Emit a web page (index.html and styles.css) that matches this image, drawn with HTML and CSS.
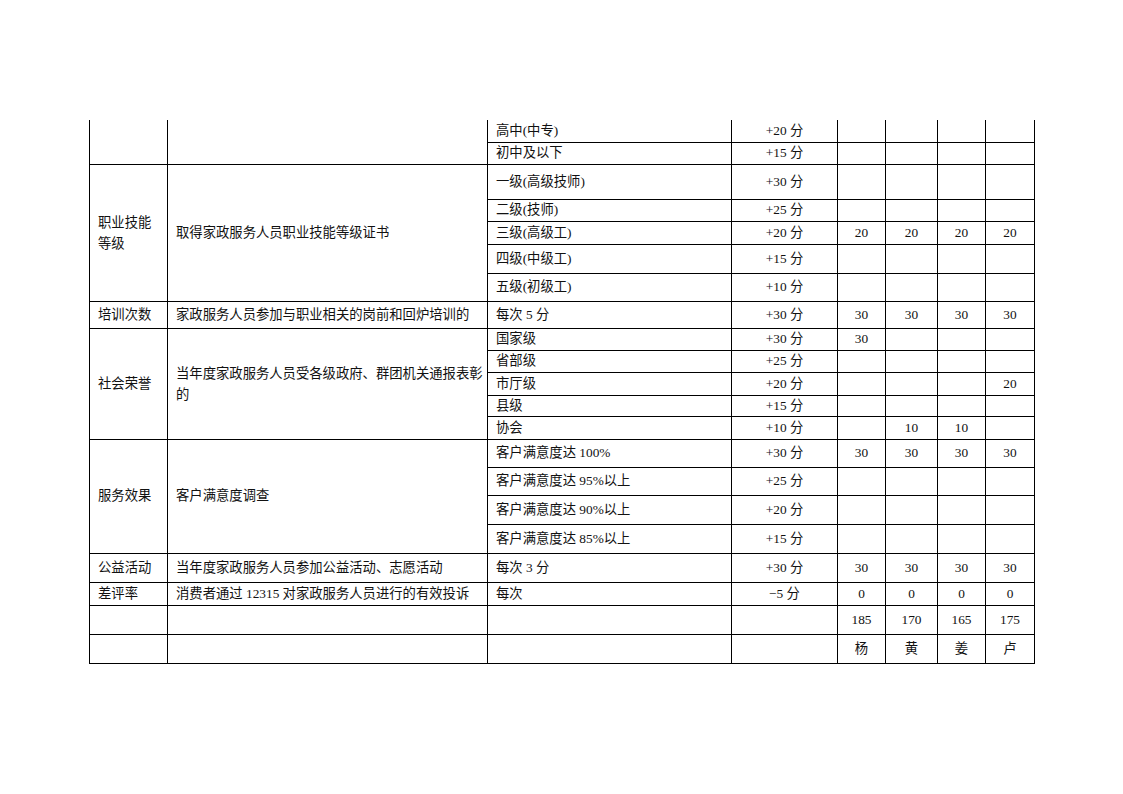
FILE: index.html
```html
<!DOCTYPE html>
<html lang="zh-CN">
<head>
<meta charset="utf-8">
<title>评分表</title>
<link rel="stylesheet" href="styles.css">
</head>
<body>
<div class="page">
<table class="score">
<colgroup>
<col class="c1"><col class="c2"><col class="c3"><col class="c4">
<col class="c5"><col class="c6"><col class="c7"><col class="c8">
</colgroup>
<tbody>
<tr class="first h22"><td rowspan="2"></td><td rowspan="2"></td><td class="t">高中(中专)</td><td class="n">+20 分</td><td></td><td></td><td></td><td></td></tr>
<tr class="h22"><td class="t">初中及以下</td><td class="n">+15 分</td><td></td><td></td><td></td><td></td></tr>

<tr class="h35"><td class="t lh" rowspan="5">职业技能<br>等级</td><td class="t" rowspan="5">取得家政服务人员职业技能等级证书</td><td class="t">一级(高级技师)</td><td class="n">+30 分</td><td></td><td></td><td></td><td></td></tr>
<tr class="h22"><td class="t">二级(技师)</td><td class="n">+25 分</td><td></td><td></td><td></td><td></td></tr>
<tr class="h23"><td class="t">三级(高级工)</td><td class="n">+20 分</td><td class="n">20</td><td class="n">20</td><td class="n">20</td><td class="n">20</td></tr>
<tr class="h29"><td class="t">四级(中级工)</td><td class="n">+15 分</td><td></td><td></td><td></td><td></td></tr>
<tr class="h28"><td class="t">五级(初级工)</td><td class="n">+10 分</td><td></td><td></td><td></td><td></td></tr>

<tr class="h27"><td class="t">培训次数</td><td class="t">家政服务人员参加与职业相关的岗前和回炉培训的</td><td class="t">每次 5 分</td><td class="n">+30 分</td><td class="n">30</td><td class="n">30</td><td class="n">30</td><td class="n">30</td></tr>

<tr class="h22"><td class="t" rowspan="5">社会荣誉</td><td class="t lh" rowspan="5">当年度家政服务人员受各级政府、群团机关通报表彰<br>的</td><td class="t">国家级</td><td class="n">+30 分</td><td class="n">30</td><td></td><td></td><td></td></tr>
<tr class="h22"><td class="t">省部级</td><td class="n">+25 分</td><td></td><td></td><td></td><td></td></tr>
<tr class="h23"><td class="t">市厅级</td><td class="n">+20 分</td><td></td><td></td><td></td><td class="n">20</td></tr>
<tr class="h21"><td class="t">县级</td><td class="n">+15 分</td><td></td><td></td><td></td><td></td></tr>
<tr class="h23"><td class="t">协会</td><td class="n">+10 分</td><td></td><td class="n">10</td><td class="n">10</td><td></td></tr>

<tr class="h28"><td class="t" rowspan="4">服务效果</td><td class="t" rowspan="4">客户满意度调查</td><td class="t">客户满意度达 100%</td><td class="n">+30 分</td><td class="n">30</td><td class="n">30</td><td class="n">30</td><td class="n">30</td></tr>
<tr class="h28"><td class="t">客户满意度达 95%以上</td><td class="n">+25 分</td><td></td><td></td><td></td><td></td></tr>
<tr class="h29"><td class="t">客户满意度达 90%以上</td><td class="n">+20 分</td><td></td><td></td><td></td><td></td></tr>
<tr class="h29"><td class="t">客户满意度达 85%以上</td><td class="n">+15 分</td><td></td><td></td><td></td><td></td></tr>

<tr class="h29"><td class="t">公益活动</td><td class="t">当年度家政服务人员参加公益活动、志愿活动</td><td class="t">每次 3 分</td><td class="n">+30 分</td><td class="n">30</td><td class="n">30</td><td class="n">30</td><td class="n">30</td></tr>
<tr class="h23"><td class="t">差评率</td><td class="t">消费者通过 12315 对家政服务人员进行的有效投诉</td><td class="t">每次</td><td class="n">−5 分</td><td class="n">0</td><td class="n">0</td><td class="n">0</td><td class="n">0</td></tr>
<tr class="h29"><td></td><td></td><td></td><td></td><td class="n">185</td><td class="n">170</td><td class="n">165</td><td class="n">175</td></tr>
<tr class="h29"><td></td><td></td><td></td><td></td><td class="n">杨</td><td class="n">黄</td><td class="n">姜</td><td class="n">卢</td></tr>
</tbody>
</table>
</div>
</body>
</html>
```

FILE: styles.css
```css
html, body {
  margin: 0;
  padding: 0;
  background: #ffffff;
}

.page {
  padding: 120px 0 0 89px;
}

.score {
  border-collapse: collapse;
  table-layout: fixed;
  width: 946px;
  font-family: "Liberation Serif", "Noto Sans CJK SC", serif;
  font-size: 13.33px;
  color: #111;
}

.c1 { width: 78px; }
.c2 { width: 320px; }
.c3 { width: 244px; }
.c4 { width: 106px; }
.c5 { width: 48px; }
.c6 { width: 52px; }
.c7 { width: 48px; }
.c8 { width: 49px; }

.score td {
  border: 1px solid #000;
  padding: 0;
  vertical-align: middle;
  line-height: 16px;
  white-space: nowrap;
  overflow: hidden;
}

.score .first td {
  border-top: none;
}

.score td.t {
  text-align: left;
  padding-left: 8px;
}

.score td.lh {
  line-height: 21px;
}

.score td.n {
  text-align: center;
}

.h21 { height: 21px; }
.h22 { height: 22px; }
.h23 { height: 23px; }
.h27 { height: 27px; }
.h28 { height: 28px; }
.h29 { height: 29px; }
.h35 { height: 35px; }
```
